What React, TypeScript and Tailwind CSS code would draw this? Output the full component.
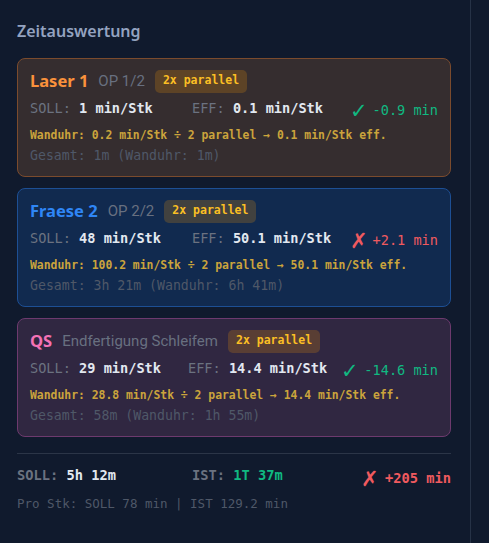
import React from 'react';

const sans = { fontFamily: '"Noto Sans", "Open Sans", sans-serif' };
const subFont = { fontFamily: 'Roboto, "Noto Sans", sans-serif' };
const mono = { fontFamily: '"DejaVu Sans Mono", "Liberation Mono", monospace' };

type Card = {
  name: string;
  sub: string;
  nameCls: string;
  cardCls: string;
  soll: string;
  eff: string;
  ok: boolean;
  delta: string;
  wand: string;
  ges: string;
  sollW: string;
};

const cards: Card[] = [
  {
    name: 'Laser 1',
    sub: 'OP 1/2',
    nameCls: 'text-[#fb923c]',
    cardCls: 'bg-[#352d2f] border-[#7b4b2d]',
    soll: '1 min/Stk',
    eff: '0.1 min/Stk',
    ok: true,
    delta: '-0.9 min',
    wand: 'Wanduhr: 0.2 min/Stk ÷ 2 parallel → 0.1 min/Stk eff.',
    ges: 'Gesamt: 1m (Wanduhr: 1m)',
    sollW: 'w-[162px]',
  },
  {
    name: 'Fraese 2',
    sub: 'OP 2/2',
    nameCls: 'text-[#2f86f6]',
    cardCls: 'bg-[#112a4f] border-[#1d4f94]',
    soll: '48 min/Stk',
    eff: '50.1 min/Stk',
    ok: false,
    delta: '+2.1 min',
    wand: 'Wanduhr: 100.2 min/Stk ÷ 2 parallel → 50.1 min/Stk eff.',
    ges: 'Gesamt: 3h 21m (Wanduhr: 6h 41m)',
    sollW: 'w-[162px]',
  },
  {
    name: 'QS',
    sub: 'Endfertigung Schleifem',
    nameCls: 'text-[#f472b6]',
    cardCls: 'bg-[#302741] border-[#6d3a6e]',
    soll: '29 min/Stk',
    eff: '14.4 min/Stk',
    ok: true,
    delta: '-14.6 min',
    wand: 'Wanduhr: 28.8 min/Stk ÷ 2 parallel → 14.4 min/Stk eff.',
    ges: 'Gesamt: 58m (Wanduhr: 1h 55m)',
    sollW: 'w-[158px]',
  },
];

function OpCard({ c }: { c: Card }) {
  return (
    <div className={`rounded-lg border px-3 pt-[10px] pb-[11px] ${c.cardCls}`}>
      <div className="flex h-[24px] items-center gap-[10px]">
        <span className={`text-[16.5px] font-bold ${c.nameCls}`} style={sans}>
          {c.name}
        </span>
        <span className="text-[15px] text-[#687080]" style={subFont}>
          {c.sub}
        </span>
        <span
          className="flex h-[23px] items-center rounded-[5px] bg-amber-500/20 px-[8px] text-[11.5px] font-bold text-[#fbbf24]"
          style={mono}
        >
          2x parallel
        </span>
      </div>
      <div className="mt-[5px] flex h-[20px] items-center text-[13.6px]" style={mono}>
        <span className={c.sollW}>
          <span className="text-[#6b7280]">SOLL: </span>
          <span className="font-semibold text-[#e2e8f0]">{c.soll}</span>
        </span>
        <span>
          <span className="text-[#6b7280]">EFF: </span>
          <span className="font-semibold text-[#e2e8f0]">{c.eff}</span>
        </span>
        <span
          className={`ml-auto mt-[4px] flex items-center gap-[5px] ${c.ok ? 'text-[#10b981]' : 'text-[#f05a5f]'}`}
        >
          <span className="text-[21px] leading-none" style={sans}>
            {c.ok ? '✓' : '✗'}
          </span>
          <span>{c.delta}</span>
        </span>
      </div>
      <div className="mt-[9px] text-[11.4px] font-semibold leading-[16px] text-[#cba43c]" style={mono}>
        {c.wand}
      </div>
      <div className="mt-[4px] text-[13.2px] leading-[18px] text-[#4f5868]" style={mono}>
        {c.ges}
      </div>
    </div>
  );
}

export default function App() {
  return (
    <div className="flex h-[543px] w-full bg-[#101a2d]">
      <div className="w-[471px] shrink-0 border-r border-[#263246] pl-[17px] pr-[19px] pt-[19px]">
        <h2 className="text-[16px] font-semibold leading-[24px] text-[#94a3c0]" style={sans}>
          Zeitauswertung
        </h2>
        <div className="mt-[15px] flex flex-col gap-[11px]">
          {cards.map((c) => (
            <OpCard key={c.name} c={c} />
          ))}
        </div>
        <div className="mt-[16px] border-t border-[#2b3547] pt-[11px]" style={mono}>
          <div className="flex h-[20px] items-center text-[13.7px] font-bold">
            <span className="w-[175px]">
              <span className="text-[#6b7280]">SOLL: </span>
              <span className="text-[#e2e8f0]">5h 12m</span>
            </span>
            <span>
              <span className="text-[#6b7280]">IST: </span>
              <span className="text-[#10b981]">1T 37m</span>
            </span>
            <span className="ml-auto mt-[6px] flex items-center gap-[6px] text-[#f05a5f]">
              <span className="text-[21px] font-normal leading-none" style={sans}>
                ✗
              </span>
              <span>+205 min</span>
            </span>
          </div>
          <div className="mt-[10px] text-[12.5px] leading-[18px] text-[#4f5868]">
            Pro Stk: SOLL 78 min | IST 129.2 min
          </div>
        </div>
      </div>
      <div className="flex-1" />
    </div>
  );
}
